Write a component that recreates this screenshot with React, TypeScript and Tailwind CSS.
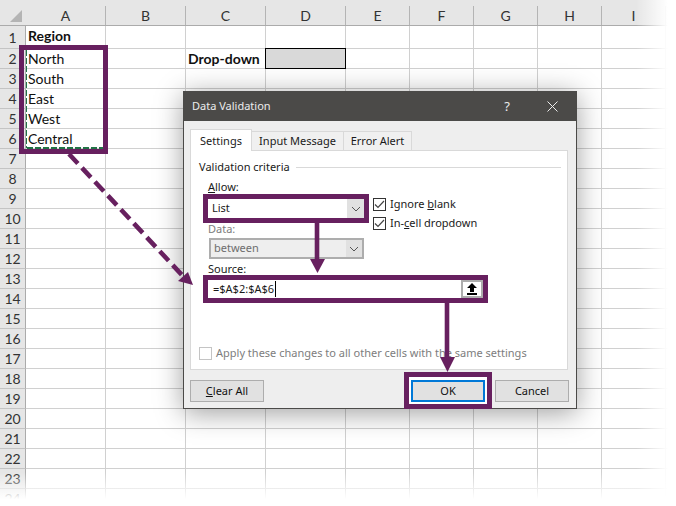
import React from 'react';

const COLS = ['A', 'B', 'C', 'D', 'E', 'F', 'G', 'H', 'I'];
const ROWS = Array.from({ length: 24 }, (_, i) => i + 1);

const CELLS: Record<string, string> = {
  A1: 'Region',
  A2: 'North',
  A3: 'South',
  A4: 'East',
  A5: 'West',
  A6: 'Central',
  C2: 'Drop-down',
};

const Chevron = () => (
  <svg width="10" height="6" viewBox="0 0 10 6" fill="none">
    <path d="M1 1l4 4 4-4" stroke="#555" strokeWidth="1" />
  </svg>
);

const CheckBox = ({ checked, disabled, children }: { checked?: boolean; disabled?: boolean; children: React.ReactNode }) => (
  <div className="flex items-center gap-[4px]">
    <div
      className={`flex h-[13px] w-[13px] items-center justify-center border bg-white ${
        disabled ? 'border-[#c4c4c4]' : 'border-[#333]'
      }`}
    >
      {checked && (
        <svg width="11" height="9" viewBox="0 0 11 9" fill="none">
          <path d="M1 4.5l3 3 6-6.5" stroke="#444" strokeWidth="1.2" />
        </svg>
      )}
    </div>
    <span className={`leading-[16px] ${disabled ? 'text-[#7d7d7d]' : 'text-[#1a1a1a]'}`}>{children}</span>
  </div>
);

const DialogButton = ({ children, primary }: { children: React.ReactNode; primary?: boolean }) => (
  <button
    className={`h-[22px] w-[74px] bg-[#e1e1e1] text-center text-[11px] leading-[16px] text-[#111] ${
      primary ? 'border-2 border-[#0078d7]' : 'border border-[#adadad]'
    }`}
  >
    {children}
  </button>
);

const Tab = ({ label, active, width }: { label: string; active?: boolean; width: string }) => (
  <div
    className={`flex items-center justify-center border border-b-0 border-[#d9d9d9] text-[11px] leading-[16px] text-[#1a1a1a] ${width} ${
      active ? 'z-10 -mb-px h-[22px] bg-white' : 'h-[19px] border-l-0 bg-[#f0f0f0]'
    }`}
  >
    {label}
  </div>
);

const Dialog = () => (
  <div className="absolute left-[183px] top-[91px] flex h-[318px] w-[394px] flex-col border border-[#4b4a48] bg-[#eeeeee] font-['Noto_Sans',sans-serif] shadow-[0_4px_26px_rgba(0,0,0,0.38)]">
    <div className="flex h-[29px] items-center bg-[#4b4a48] pl-[8px] text-[11px] text-[#ececec]">
      <span className="w-[80px] whitespace-nowrap">Data Validation</span>
      <span className="ml-[230px] w-[10px] text-center text-[13px]">?</span>
      <svg className="ml-[35px]" width="11" height="11" viewBox="0 0 11 11" fill="none">
        <path d="M.5.5l10 10M10.5.5l-10 10" stroke="#ececec" strokeWidth="1" />
      </svg>
    </div>

    <div className="flex h-[29px] items-end pl-[6px]">
      <Tab label="Settings" active width="w-[62px]" />
      <Tab label="Input Message" width="w-[92px]" />
      <Tab label="Error Alert" width="w-[68px]" />
    </div>

    <div className="ml-[6px] flex h-[220px] w-[378px] flex-col border border-[#d9d9d9] bg-white pb-[8px] pl-[8px] pt-[8px] text-[11px] leading-[16px] text-[#1a1a1a]">
      <div className="flex items-center gap-[6px] pr-[6px]">
        <span>Validation criteria</span>
        <div className="h-px flex-1 bg-[#d9d9d9]" />
      </div>

      <div className="mt-[4px] flex pl-[9px]">
        <div className="flex w-[156px] flex-col">
          <span>
            <u>A</u>llow:
          </span>
          <div className="z-10 mt-[4px] flex h-[19px] items-center justify-between bg-white pl-[4px] outline-[5px] outline-[#67205f]">
            <span className="pb-[2px]">List</span>
            <div className="flex h-full w-[17px] items-center justify-center bg-[#e1e1e1]">
              <Chevron />
            </div>
          </div>
          <span className="mt-[3px] text-[#7d7d7d]">Data:</span>
          <div className="ml-[1px] mt-[1px] flex h-[21px] items-center justify-between border-2 border-[#adadad] bg-[#eeeeee] pl-[3px] text-[#6d6d6d]">
            <span className="pb-[1px]">between</span>
            <div className="flex h-full w-[16px] items-center justify-center bg-[#e1e1e1]">
              <Chevron />
            </div>
          </div>
        </div>
        <div className="ml-[9px] flex flex-col gap-[3px] pt-[17px]">
          <CheckBox checked>
            Ignore <u>b</u>lank
          </CheckBox>
          <CheckBox checked>
            In-<u>c</u>ell dropdown
          </CheckBox>
        </div>
      </div>

      <span className="mt-[2px] pl-[9px]">Source:</span>
      <div className="z-10 ml-[9px] mt-[3px] flex h-[18px] w-[275px] items-center justify-between bg-white pl-[5px] outline-[5px] outline-[#67205f]">
        <span className="border-r border-black pr-px">=$A$2:$A$6</span>
        <div className="flex h-full w-[22px] items-center justify-center border-2 border-[#adadad] bg-white">
          <svg width="12" height="12" viewBox="0 0 12 12">
            <path d="M6 0L11 5H8V9H4V5H1Z" fill="#000" />
            <rect x="1" y="10" width="10" height="2" fill="#000" />
          </svg>
        </div>
      </div>

      <div className="mt-auto">
        <CheckBox disabled>Apply these changes to all other cells with the same settings</CheckBox>
      </div>
    </div>

    <div className="mt-[9px] flex items-center px-[6px]">
      <DialogButton>
        <u>C</u>lear All
      </DialogButton>
      <div className="z-10 -my-[7px] ml-auto border-[5px] border-[#67205f] bg-white p-[2px]">
        <DialogButton primary>OK</DialogButton>
      </div>
      <div className="ml-[3px] mr-[1px]">
        <DialogButton>Cancel</DialogButton>
      </div>
    </div>
  </div>
);

export default function App() {
  return (
    <div className="relative h-[506px] w-[676px] overflow-hidden bg-white font-['Lato',sans-serif] text-[14px] text-[#111]">
      <div className="grid grid-cols-[26px_80px_80px_80px_80px_64px_64px_64px_64px_64px_10px] grid-rows-[26px_23px_repeat(23,20px)]">
        <div className="border-b border-[#ababab] bg-[#e6e6e6]">
          <div className="ml-[10px] mt-[10px] h-0 w-0 border-b-[12px] border-l-[12px] border-b-[#b4b4b4] border-l-transparent" />
        </div>
        {COLS.map((c) => (
          <div key={c} className="border-b border-[#ababab] bg-[#e6e6e6] pt-[6px]">
            <div className="flex h-[19px] items-center justify-center border-r border-[#b4b4b4] text-[#333]">{c}</div>
          </div>
        ))}
        <div className="border-b border-[#ababab] bg-[#e6e6e6]" />

        {ROWS.map((r) => (
          <React.Fragment key={r}>
            <div className="flex items-center justify-center border-b border-r border-[#c4c4c4] border-r-[#ababab] bg-[#e6e6e6] text-[#333]">
              {r}
            </div>
            {COLS.map((c) =>
              c === 'D' && r === 2 ? (
                <div key={c} className="z-10 -ml-px -mt-px border border-black bg-[#d9d9d9]" />
              ) : (
                <div
                  key={c}
                  className={`flex items-center whitespace-nowrap border-b border-r border-[#d0d0d0] pl-[2px] ${
                    r === 1 ? 'pb-[3px] font-bold' : c === 'C' && r === 2 ? 'font-bold' : ''
                  }`}
                >
                  {CELLS[`${c}${r}`]}
                </div>
              ),
            )}
            <div className="border-b border-[#d0d0d0]" />
          </React.Fragment>
        ))}
      </div>

      {/* highlight round the copied range */}
      <div className="absolute left-[19px] top-[45px] h-[109px] w-[89px] border-[5px] border-[#67205f]" />

      {/* edge fade of the cropped picture */}
      <div className="absolute right-0 top-0 h-full w-[40px] bg-gradient-to-r from-transparent to-white to-[80%]" />
      <div className="absolute bottom-0 left-0 h-[34px] w-full bg-gradient-to-b from-transparent to-white to-[80%]" />

      <Dialog />

      <svg className="pointer-events-none absolute left-0 top-0 z-20" width="676" height="506" fill="none">
        <path d="M26.5 50V148" stroke="#217346" strokeWidth="1" strokeDasharray="6 2" />
        <path d="M27 148H103" stroke="#217346" strokeWidth="2" strokeDasharray="6 2" />
        <path d="M69 154L182 275" stroke="#67205f" strokeWidth="4.6" strokeDasharray="13 6" />
        <path d="M178 281L188 272L193 285Z" fill="#67205f" />
        <path d="M317 222V260" stroke="#67205f" strokeWidth="4.6" />
        <path d="M310 259H325L317.5 273Z" fill="#67205f" />
        <path d="M447 302V358" stroke="#67205f" strokeWidth="4.6" />
        <path d="M440 357H455L447.5 372Z" fill="#67205f" />
      </svg>
    </div>
  );
}
